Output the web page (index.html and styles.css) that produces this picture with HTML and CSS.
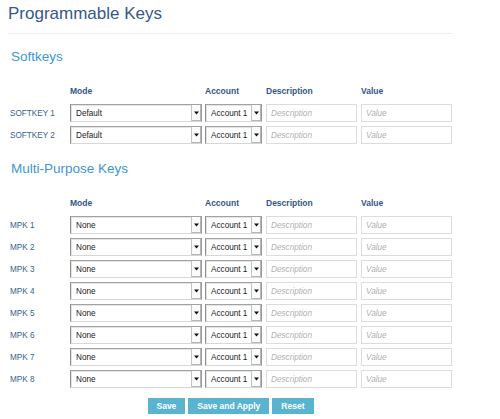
FILE: index.html
```html
<!DOCTYPE html>
<html>
<head>
<meta charset="utf-8">
<link rel="stylesheet" href="styles.css">
</head>
<body>
<div class="page">
  <h1 class="title">Programmable Keys</h1>
  <div class="rule"></div>

  <section class="group">
    <h2 class="group-title">Softkeys</h2>
    <div class="keys">
      <div class="col-head"></div>
      <div class="col-head">Mode</div>
      <div class="col-head">Account</div>
      <div class="col-head">Description</div>
      <div class="col-head">Value</div>

      <div class="key-label">SOFTKEY 1</div>
      <div class="select select-mode"><span class="select-value">Default</span><span class="select-btn"><svg width="5" height="4" viewBox="0 0 5 4"><path d="M0 0.5H5L2.5 3.5Z" fill="#111"/></svg></span></div>
      <div class="select select-account"><span class="select-value">Account 1</span><span class="select-btn"><svg width="5" height="4" viewBox="0 0 5 4"><path d="M0 0.5H5L2.5 3.5Z" fill="#111"/></svg></span></div>
      <input class="field" placeholder="Description">
      <input class="field" placeholder="Value">

      <div class="key-label">SOFTKEY 2</div>
      <div class="select select-mode"><span class="select-value">Default</span><span class="select-btn"><svg width="5" height="4" viewBox="0 0 5 4"><path d="M0 0.5H5L2.5 3.5Z" fill="#111"/></svg></span></div>
      <div class="select select-account"><span class="select-value">Account 1</span><span class="select-btn"><svg width="5" height="4" viewBox="0 0 5 4"><path d="M0 0.5H5L2.5 3.5Z" fill="#111"/></svg></span></div>
      <input class="field" placeholder="Description">
      <input class="field" placeholder="Value">
    </div>
  </section>

  <section class="group group-mpk">
    <h2 class="group-title">Multi-Purpose Keys</h2>
    <div class="keys">
      <div class="col-head"></div>
      <div class="col-head">Mode</div>
      <div class="col-head">Account</div>
      <div class="col-head">Description</div>
      <div class="col-head">Value</div>

      <div class="key-label">MPK 1</div>
      <div class="select select-mode"><span class="select-value">None</span><span class="select-btn"><svg width="5" height="4" viewBox="0 0 5 4"><path d="M0 0.5H5L2.5 3.5Z" fill="#111"/></svg></span></div>
      <div class="select select-account"><span class="select-value">Account 1</span><span class="select-btn"><svg width="5" height="4" viewBox="0 0 5 4"><path d="M0 0.5H5L2.5 3.5Z" fill="#111"/></svg></span></div>
      <input class="field" placeholder="Description">
      <input class="field" placeholder="Value">

      <div class="key-label">MPK 2</div>
      <div class="select select-mode"><span class="select-value">None</span><span class="select-btn"><svg width="5" height="4" viewBox="0 0 5 4"><path d="M0 0.5H5L2.5 3.5Z" fill="#111"/></svg></span></div>
      <div class="select select-account"><span class="select-value">Account 1</span><span class="select-btn"><svg width="5" height="4" viewBox="0 0 5 4"><path d="M0 0.5H5L2.5 3.5Z" fill="#111"/></svg></span></div>
      <input class="field" placeholder="Description">
      <input class="field" placeholder="Value">

      <div class="key-label">MPK 3</div>
      <div class="select select-mode"><span class="select-value">None</span><span class="select-btn"><svg width="5" height="4" viewBox="0 0 5 4"><path d="M0 0.5H5L2.5 3.5Z" fill="#111"/></svg></span></div>
      <div class="select select-account"><span class="select-value">Account 1</span><span class="select-btn"><svg width="5" height="4" viewBox="0 0 5 4"><path d="M0 0.5H5L2.5 3.5Z" fill="#111"/></svg></span></div>
      <input class="field" placeholder="Description">
      <input class="field" placeholder="Value">

      <div class="key-label">MPK 4</div>
      <div class="select select-mode"><span class="select-value">None</span><span class="select-btn"><svg width="5" height="4" viewBox="0 0 5 4"><path d="M0 0.5H5L2.5 3.5Z" fill="#111"/></svg></span></div>
      <div class="select select-account"><span class="select-value">Account 1</span><span class="select-btn"><svg width="5" height="4" viewBox="0 0 5 4"><path d="M0 0.5H5L2.5 3.5Z" fill="#111"/></svg></span></div>
      <input class="field" placeholder="Description">
      <input class="field" placeholder="Value">

      <div class="key-label">MPK 5</div>
      <div class="select select-mode"><span class="select-value">None</span><span class="select-btn"><svg width="5" height="4" viewBox="0 0 5 4"><path d="M0 0.5H5L2.5 3.5Z" fill="#111"/></svg></span></div>
      <div class="select select-account"><span class="select-value">Account 1</span><span class="select-btn"><svg width="5" height="4" viewBox="0 0 5 4"><path d="M0 0.5H5L2.5 3.5Z" fill="#111"/></svg></span></div>
      <input class="field" placeholder="Description">
      <input class="field" placeholder="Value">

      <div class="key-label">MPK 6</div>
      <div class="select select-mode"><span class="select-value">None</span><span class="select-btn"><svg width="5" height="4" viewBox="0 0 5 4"><path d="M0 0.5H5L2.5 3.5Z" fill="#111"/></svg></span></div>
      <div class="select select-account"><span class="select-value">Account 1</span><span class="select-btn"><svg width="5" height="4" viewBox="0 0 5 4"><path d="M0 0.5H5L2.5 3.5Z" fill="#111"/></svg></span></div>
      <input class="field" placeholder="Description">
      <input class="field" placeholder="Value">

      <div class="key-label">MPK 7</div>
      <div class="select select-mode"><span class="select-value">None</span><span class="select-btn"><svg width="5" height="4" viewBox="0 0 5 4"><path d="M0 0.5H5L2.5 3.5Z" fill="#111"/></svg></span></div>
      <div class="select select-account"><span class="select-value">Account 1</span><span class="select-btn"><svg width="5" height="4" viewBox="0 0 5 4"><path d="M0 0.5H5L2.5 3.5Z" fill="#111"/></svg></span></div>
      <input class="field" placeholder="Description">
      <input class="field" placeholder="Value">

      <div class="key-label">MPK 8</div>
      <div class="select select-mode"><span class="select-value">None</span><span class="select-btn"><svg width="5" height="4" viewBox="0 0 5 4"><path d="M0 0.5H5L2.5 3.5Z" fill="#111"/></svg></span></div>
      <div class="select select-account"><span class="select-value">Account 1</span><span class="select-btn"><svg width="5" height="4" viewBox="0 0 5 4"><path d="M0 0.5H5L2.5 3.5Z" fill="#111"/></svg></span></div>
      <input class="field" placeholder="Description">
      <input class="field" placeholder="Value">
    </div>
  </section>

  <div class="actions">
    <button class="btn">Save</button>
    <button class="btn">Save and Apply</button>
    <button class="btn">Reset</button>
  </div>
</div>
</body>
</html>
```

FILE: styles.css
```css
html, body {
  margin: 0;
  padding: 0;
  background: #ffffff;
}

body {
  font-family: "Liberation Sans", Arial, Helvetica, sans-serif;
}

.page {
  width: 445px;
  margin-left: 8px;
  padding-top: 3px;
}

.title {
  margin: 0;
  font-size: 17px;
  line-height: 21px;
  font-weight: normal;
  color: #34598a;
}

.rule {
  height: 1px;
  background: #eeeeee;
  margin-top: 9px;
}

.group-title {
  margin: 15px 0 0 3px;
  font-size: 13.5px;
  line-height: 16px;
  font-weight: normal;
  color: #3a98d4;
}

.group-mpk .group-title {
  margin-top: 17px;
}

.keys {
  display: grid;
  grid-template-columns: 62px 135px 61px 95px 91px;
  grid-template-rows: 14px;
  grid-auto-rows: 18px;
  row-gap: 4px;
  margin-top: 21px;
}

.col-head {
  grid-row: 1;
  align-self: start;
  height: 10px;
  margin-bottom: 4px;
  font-size: 8.5px;
  line-height: 10px;
  font-weight: bold;
  color: #34578a;
}

.key-label {
  display: flex;
  align-items: center;
  padding-left: 2px;
  font-size: 8.2px;
  color: #3b5e8e;
}

.select {
  display: flex;
  align-items: stretch;
  box-sizing: border-box;
  height: 18px;
  background: #ffffff;
  border-top: 1px solid #a2a2a2;
  border-left: 1px solid #8e8e8e;
  border-right: 1px solid #9a9a9a;
  border-bottom: 1px solid #d6d6d6;
  box-shadow: inset 1px 1px 0 #e4e4e4;
}

.select-mode {
  width: 132px;
}

.select-account {
  width: 57px;
}

.select-value {
  flex: 1;
  display: flex;
  align-items: center;
  padding-left: 5px;
  font-size: 8.2px;
  color: #1a1a1a;
  white-space: nowrap;
  overflow: hidden;
}

.select-btn {
  width: 9px;
  display: flex;
  align-items: center;
  justify-content: center;
  border-left: 1px solid #c4c4c4;
  background: #fbfbfb;
  box-shadow: inset -1px -1px 0 #b5b5b5;
}

.select-btn svg {
  display: block;
}

.field {
  box-sizing: border-box;
  width: 91px;
  height: 18px;
  margin: 0;
  padding: 0 0 0 4px;
  border: 1px solid #dcdcdc;
  background: #ffffff;
  font-family: "Liberation Sans", Arial, sans-serif;
  font-size: 8.2px;
  color: #333;
  outline: none;
}

.field::placeholder {
  color: #b0b0b0;
  font-style: italic;
}

.actions {
  display: flex;
  justify-content: center;
  gap: 3px;
  margin-top: 10px;
}

.btn {
  height: 16px;
  margin: 0;
  padding: 0 9px;
  border: none;
  background: #5ab3cf;
  color: #ffffff;
  font-family: "Liberation Sans", Arial, sans-serif;
  font-size: 8.5px;
  font-weight: bold;
  line-height: 16px;
}
```
